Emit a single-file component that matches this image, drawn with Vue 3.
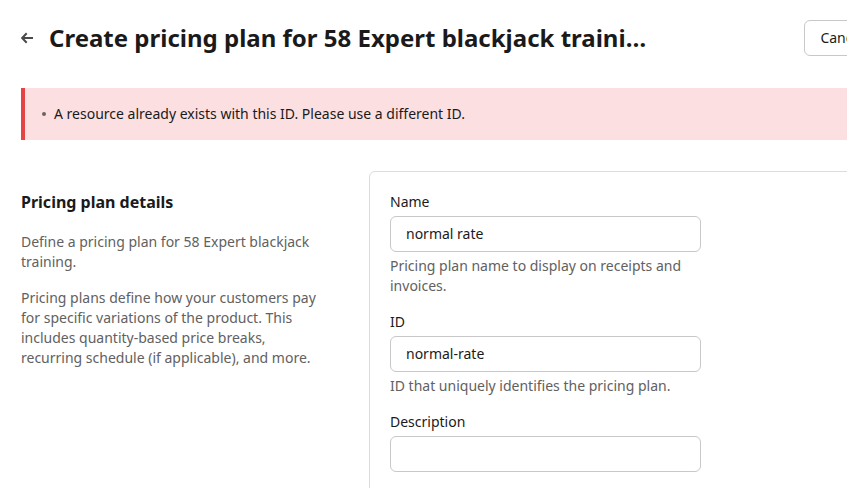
<script setup>
import { ref } from 'vue'

const product = '58 Expert blackjack training'
const errors = ['A resource already exists with this ID. Please use a different ID.']
const fields = ref([
  { id: 'plan-name', label: 'Name', value: 'normal rate', help: 'Pricing plan name to display on receipts and invoices.' },
  { id: 'plan-id', label: 'ID', value: 'normal-rate', help: 'ID that uniquely identifies the pricing plan.' },
  { id: 'plan-description', label: 'Description', value: '', help: '' }
])
</script>

<template>
  <main class="page">
    <header class="header">
      <a class="back" href="#" aria-label="Back">
        <svg width="12" height="12" viewBox="0 0 12 12" fill="none" stroke="currentColor" stroke-width="2">
          <path d="M12 6H1.5M5.7 1.3 1.2 6 5.7 10.7" />
        </svg>
      </a>
      <h1 class="title">Create pricing plan for {{ product }}</h1>
      <button class="button" type="button">Cancel</button>
    </header>

    <ul class="alert" role="alert">
      <li v-for="error in errors" :key="error">{{ error }}</li>
    </ul>

    <section class="details">
      <div class="intro">
        <h2>Pricing plan details</h2>
        <p>Define a pricing plan for {{ product }}.</p>
        <p>
          Pricing plans define how your customers pay for specific variations of the product.
          This includes quantity-based price breaks, recurring schedule (if applicable), and more.
        </p>
      </div>
      <form class="card" @submit.prevent>
        <div v-for="field in fields" :key="field.id" class="field">
          <label :for="field.id">{{ field.label }}</label>
          <input :id="field.id" v-model="field.value" type="text" />
          <p v-if="field.help">{{ field.help }}</p>
        </div>
      </form>
    </section>
  </main>
</template>

<style>
body {
  background: #fff;
  overflow: hidden;
}
</style>

<style scoped>
.page {
  box-sizing: border-box;
  min-width: 900px;
  padding: 20px 20px 20px 21px;
  color: #1a1a1a;
  font: 14px/20px "Noto Sans", sans-serif;
}

.header {
  display: flex;
  align-items: center;
}

.back {
  display: flex;
  width: 28px;
  flex: none;
  color: #4a4a4a;
}

.title {
  flex: 1;
  min-width: 0;
  margin: 0 152px 0 0;
  overflow: hidden;
  font-size: 24px;
  font-weight: 700;
  line-height: 36px;
  text-overflow: ellipsis;
  white-space: nowrap;
}

.button {
  flex: none;
  height: 36px;
  padding: 0 15px;
  border: 1px solid #c8c8c8;
  border-radius: 6px;
  background: #fff;
  color: inherit;
  font: inherit;
}

.alert {
  margin: 32px 0 0;
  padding: 16px 20px 16px 29px;
  border-left: 4px solid #e64444;
  background: #fce0e1;
  list-style: none;
}

.alert li {
  position: relative;
}

.alert li::before {
  content: "";
  position: absolute;
  top: 8px;
  left: -12px;
  width: 4px;
  height: 4px;
  border-radius: 50%;
  background: #6d6263;
}

.details {
  display: grid;
  grid-template-columns: 308px 1fr;
  column-gap: 40px;
  margin-top: 31px;
}

.intro {
  padding-top: 19px;
  color: #616161;
}

.intro h2 {
  margin: 0 0 18px;
  color: #1a1a1a;
  font-size: 16px;
  font-weight: 700;
  line-height: 24px;
}

.intro p {
  margin: 0 0 16px;
}

.card {
  display: flex;
  flex-direction: column;
  gap: 16px;
  padding: 20px;
  border: 1px solid #dcdcdc;
  border-radius: 6px;
}

.field {
  display: flex;
  flex-direction: column;
  gap: 4px;
  max-width: 311px;
}

.field:last-child {
  padding-bottom: 20px;
}

.field input {
  box-sizing: border-box;
  width: 100%;
  height: 36px;
  padding: 0 15px 2px;
  border: 1px solid #c8c8c8;
  border-radius: 6px;
  background: #fff;
  color: inherit;
  font: inherit;
}

.field p {
  margin: 0;
  color: #616161;
}
</style>
